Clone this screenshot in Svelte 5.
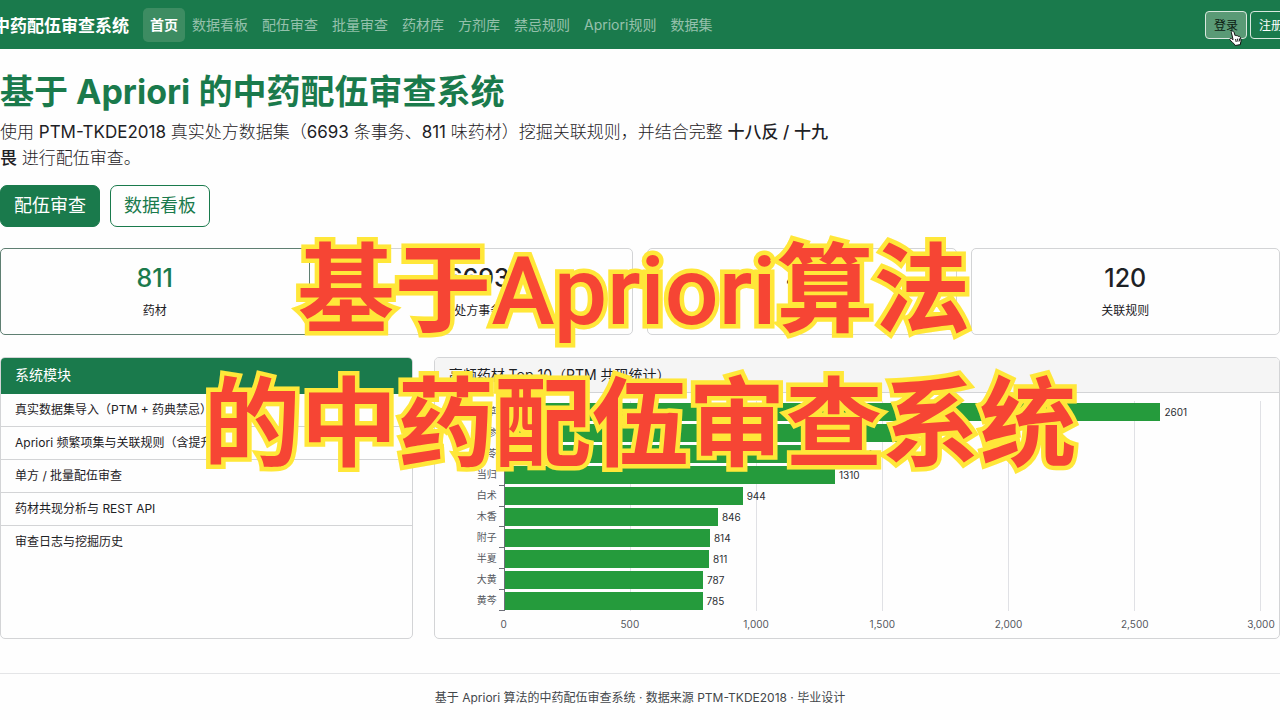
<script lang="ts">
	interface Herb {
		name: string;
		count: number;
	}

	const navItems = ['首页', '数据看板', '配伍审查', '批量审查', '药材库', '方剂库', '禁忌规则', 'Apriori规则', '数据集'];

	const stats = [
		{ value: 811, label: '药材' },
		{ value: 6693, label: '处方事务' },
		{ value: 43, label: '禁忌规则' },
		{ value: 120, label: '关联规则' }
	];

	const modules = [
		'真实数据集导入（PTM + 药典禁忌）',
		'Apriori 频繁项集与关联规则（含提升）',
		'单方 / 批量配伍审查',
		'药材共现分析与 REST API',
		'审查日志与挖掘历史'
	];

	const herbs: Herb[] = [
		{ name: '甘草', count: 2601 },
		{ name: '人参', count: 1630 },
		{ name: '茯苓', count: 1354 },
		{ name: '当归', count: 1310 },
		{ name: '白术', count: 944 },
		{ name: '木香', count: 846 },
		{ name: '附子', count: 814 },
		{ name: '半夏', count: 811 },
		{ name: '大黄', count: 787 },
		{ name: '黄芩', count: 785 }
	];

	const axisMax = 3000;
	const ticks = [0, 500, 1000, 1500, 2000, 2500, 3000];

	let current = $state('首页');
</script>

<div class="page">
	<header class="navbar">
		<a class="brand" href="#home">中药配伍审查系统</a>
		<nav>
			{#each navItems as item}
				<a href="#{item}" class:active={item === current} onclick={() => (current = item)}>{item}</a>
			{/each}
		</nav>
		<div class="account">
			<button type="button" class="hovered">
				登录
				<svg class="pointer" width="13" height="16" viewBox="0 0 13 16" aria-hidden="true">
					<path
						d="M3.2 1.3c.8-.5 1.6 0 1.8.8l1.1 3.6c.5-.6 1.5-.5 1.8.3.6-.5 1.5-.3 1.7.5.8-.4 1.6.1 1.8.9l.6 2.6c.3 1.3-.1 2.2-.5 3v1.6l-5.3.9-.8-1.4C4.2 13 2.6 11.8 1 9.9c-.8-1 .6-2.1 1.6-1.3l1.5 1.1L2.4 2.6c-.1-.5.2-1.1.8-1.3z"
						fill="#fff"
						stroke="#111"
					/>
					<path d="M6.6 9l.6 3M8.5 8.7l.5 3M10.3 8.4l.5 3" stroke="#111" fill="none" />
				</svg>
			</button>
			<button type="button">注册</button>
		</div>
	</header>

	<main>
		<section class="hero">
			<h1>基于 Apriori 的中药配伍审查系统</h1>
			<p class="lead">
				使用 <b>PTM-TKDE2018</b> 真实处方数据集（<b>6693</b> 条事务、<b>811</b> 味药材）挖掘关联规则，并结合完整
				<strong>十八反 / 十九畏</strong> 进行配伍审查。
			</p>
			<div class="actions">
				<a class="btn primary" href="#check">配伍审查</a>
				<a class="btn" href="#board">数据看板</a>
			</div>
		</section>

		<section class="stats">
			{#each stats as stat, i}
				<div class="stat" class:accent={i === 0}>
					<div class="number">{stat.value}</div>
					<div class="caption">{stat.label}</div>
				</div>
			{/each}
		</section>

		<section class="panels">
			<div class="card modules">
				<h2>系统模块</h2>
				<ul>
					{#each modules as text}
						<li>{text}</li>
					{/each}
				</ul>
			</div>

			<div class="card herbs">
				<h2>高频药材 Top 10（PTM 共现统计）</h2>
				<div class="chart">
					<div class="names">
						{#each herbs as herb}
							<span>{herb.name}</span>
						{/each}
					</div>
					<div class="notches">
						{#each herbs as herb (herb.name)}
							<i></i>
						{/each}
					</div>
					<div class="plot">
						<div class="gridlines">
							{#each ticks.slice(1) as tick (tick)}
								<i></i>
							{/each}
						</div>
						<div class="bars">
							{#each herbs as herb}
								<div class="row">
									<div class="bar" style="width: {(herb.count / axisMax) * 100}%"></div>
									<span>{herb.count}</span>
								</div>
							{/each}
						</div>
					</div>
					<div class="axis">
						{#each ticks as tick}
							<span>{tick.toLocaleString('en-US')}</span>
						{/each}
					</div>
				</div>
			</div>
		</section>
	</main>

	<footer>基于 Apriori 算法的中药配伍审查系统 · 数据来源 PTM-TKDE2018 · 毕业设计</footer>

	<div class="caption-overlay">
		<p>基于<span>Apriori</span>算法</p>
		<p>的中药配伍审查系统</p>
	</div>
</div>

<style>
	:global(body) {
		margin: 0;
		background: #fefefe;
	}

	.page {
		--green: #1a7a4c;
		--line: #d3d4d6;
		position: relative;
		overflow: hidden;
		font-family: Inter, 'Noto Sans CJK SC', sans-serif;
		font-size: 14px;
		color: #1d2125;
	}

	.page * {
		box-sizing: border-box;
	}

	a {
		text-decoration: none;
	}

	/* the bar is a little wider than the window on both sides */
	.navbar {
		display: flex;
		align-items: center;
		height: 49px;
		margin: 0 -12px;
		background: var(--green);
	}

	.brand {
		margin-right: 14px;
		font-size: 17px;
		font-weight: 700;
		color: #fff;
		white-space: nowrap;
		padding-left: 5px;
	}

	nav {
		display: flex;
		flex: 1;
	}

	nav a {
		padding: 0 7px;
		line-height: 34px;
		border-radius: 5px;
		color: rgba(255, 255, 255, 0.55);
		white-space: nowrap;
	}

	nav a.active {
		background: #3d8c62;
		color: #fff;
		font-weight: 700;
	}

	.account {
		display: flex;
		gap: 3px;
	}

	.account button {
		position: relative;
		height: 28px;
		padding: 0 8px;
		border: 1px solid #d9e8df;
		border-radius: 4px;
		background: transparent;
		color: #fff;
		font-family: inherit;
		font-size: 12px;
	}

	.account button.hovered {
		background: #5a9a76;
		color: #0b1a11;
	}

	.pointer {
		position: absolute;
		left: 23px;
		top: 18px;
		z-index: 1;
	}

	.hero {
		padding-top: 22px;
	}

	h1 {
		margin: 0;
		font-size: 34px;
		line-height: 42px;
		font-weight: 700;
		color: var(--green);
	}

	.lead {
		max-width: 840px;
		margin: 6px 0 14px;
		font-size: 17px;
		line-height: 26px;
		font-weight: 300;
	}

	.lead strong {
		font-weight: 500;
	}

	.lead b {
		font-weight: 400;
	}

	.actions {
		display: flex;
		gap: 10px;
	}

	.btn {
		padding: 0 13px;
		border: 1px solid var(--green);
		border-radius: 7px;
		font-size: 18px;
		line-height: 40px;
		color: var(--green);
	}

	.btn.primary {
		background: var(--green);
		color: #fff;
	}

	.stats {
		display: grid;
		grid-template-columns: repeat(4, 1fr);
		gap: 14px;
		margin-top: 21px;
	}

	.stat {
		padding: 14px 0;
		border: 1px solid var(--line);
		border-radius: 5px;
		text-align: center;
	}

	.stat.accent {
		border-color: #5f7f72;
	}

	.stat.accent .number {
		color: var(--green);
	}

	.number {
		font-size: 25px;
		line-height: 31px;
		font-weight: 500;
	}

	.caption {
		margin-top: 7px;
		font-size: 12px;
		line-height: 19px;
	}

	.panels {
		display: grid;
		grid-template-columns: repeat(12, 1fr);
		gap: 21px;
		margin-top: 22px;
	}

	.card {
		border: 1px solid var(--line);
		border-radius: 5px;
		overflow: hidden;
	}

	.card h2 {
		margin: 0;
		padding: 0 14px;
		border-bottom: 1px solid var(--line);
		background: #f5f5f5;
		font-size: 14px;
		line-height: 34px;
		font-weight: 400;
	}

	/* the green header covers the card's own border */
	.card.modules h2 {
		margin: -1px -1px 0;
		padding: 0 15px;
		border-color: var(--green);
		line-height: 36px;
		background: var(--green);
		color: #fff;
	}

	.modules {
		grid-column: span 4;
	}

	.modules ul {
		margin: 0;
		padding: 0;
		list-style: none;
	}

	.modules li {
		padding: 0 14px;
		font-size: 12px;
		line-height: 32px;
		border-bottom: 1px solid var(--line);
		white-space: nowrap;
	}

	.modules li:last-child {
		border-bottom: 0;
	}

	.herbs {
		grid-column: span 8;
	}

	.chart {
		display: grid;
		grid-template-columns: 62px auto 1fr;
		padding: 8px 18px 1px 0;
		font-size: 10px;
		color: #55585e;
	}

	.names {
		display: flex;
		flex-direction: column;
		text-align: right;
		line-height: 21px;
	}

	.notches {
		display: flex;
		flex-direction: column;
		width: 5px;
		margin-left: 2px;
		border-top: 1px solid #6e7079;
	}

	.notches i {
		flex: 1;
		border-bottom: 1px solid #6e7079;
	}

	.plot {
		display: grid;
		border-left: 1px solid #6e7079;
	}

	.gridlines,
	.bars {
		grid-area: 1 / 1;
	}

	.gridlines {
		display: flex;
	}

	.gridlines i {
		flex: 1;
		border-right: 1px solid #e0e1e5;
	}

	.row {
		display: flex;
		align-items: center;
		height: 21px;
	}

	.bar {
		height: 18px;
		background: #259b3c;
	}

	.row span {
		margin-left: 4px;
		color: #2b2e33;
	}

	.axis {
		grid-column: 3;
		display: flex;
		justify-content: space-between;
		line-height: 26px;
	}

	.axis span {
		display: flex;
		justify-content: center;
		width: 0;
	}

	footer {
		margin-top: 34px;
		padding: 14px 0;
		border-top: 1px solid #e4e5e7;
		font-size: 12px;
		line-height: 19px;
		text-align: center;
		color: #43474b;
	}

	/* big title printed over the page */
	.caption-overlay {
		position: absolute;
		inset: 223px 0 auto;
		pointer-events: none;
		text-align: center;
		font-size: 97px;
		line-height: 131px;
		font-weight: 700;
		color: #f64534;
		-webkit-text-stroke: 9px #ffe739;
		paint-order: stroke fill;
		stroke-linejoin: round;
		white-space: nowrap;
	}

	.caption-overlay p {
		margin: 0;
	}

	.caption-overlay p:first-child {
		padding-right: 12px;
	}

	.caption-overlay span {
		font-family: Roboto, sans-serif;
		font-size: 95px;
		font-weight: 500;
	}
</style>
